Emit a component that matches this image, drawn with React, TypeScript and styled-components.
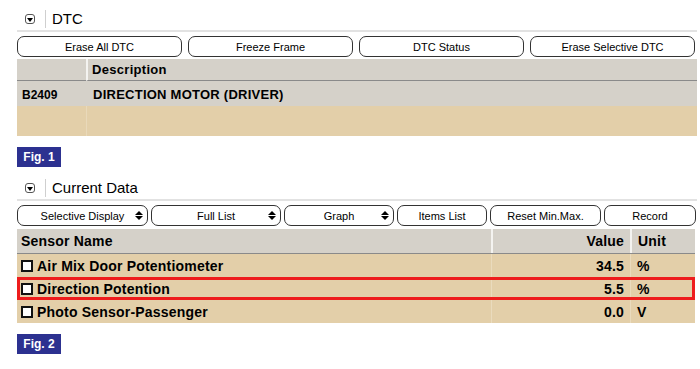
import React from "react";
import styled, { createGlobalStyle } from "styled-components";

const Global = createGlobalStyle`
  html, body { margin: 0; padding: 0; background: #fff; }
  body { font-family: "Liberation Sans", Arial, sans-serif; color: #000; }
`;

const Page = styled.div`
  width: 700px;
  height: 369px;
  padding: 0 3px 0 17px;
  box-sizing: border-box;
  overflow: hidden;
`;

const SectionHeader = styled.div<{ $top: number }>`
  display: flex;
  align-items: center;
  height: 22px;
  margin-top: ${(p) => p.$top}px;
  padding-left: 8px;
  border-bottom: 2px solid #e2e2e2;
`;

const ToggleIcon = styled.span`
  width: 10px;
  height: 10px;
  border: 1px solid #555;
  border-radius: 3px;
  box-sizing: border-box;
  display: flex;
  align-items: center;
  justify-content: center;
  &::after {
    content: "";
    border-left: 3px solid transparent;
    border-right: 3px solid transparent;
    border-top: 4px solid #000;
    margin-top: 1px;
  }
`;

const HeaderSep = styled.span`
  width: 1px;
  height: 18px;
  background: #cfcfcf;
  margin: 0 6px 0 10px;
`;

const HeaderTitle = styled.span`
  font-size: 15px;
  line-height: 18px;
`;

const ButtonRow = styled.div<{ $cols: string; $gap: number }>`
  display: grid;
  grid-template-columns: ${(p) => p.$cols};
  column-gap: ${(p) => p.$gap}px;
  margin-top: 4px;
  height: 21px;
`;

const Btn = styled.div`
  border: 1px solid #333;
  border-radius: 7px;
  background: #fff;
  font-size: 11px;
  display: flex;
  align-items: center;
  justify-content: center;
  position: relative;
  box-sizing: border-box;
  height: 21px;
`;

const SelArrow = styled.span`
  position: absolute;
  right: 4px;
  top: 5px;
  display: flex;
  flex-direction: column;
  gap: 1px;
  &::before, &::after {
    content: "";
    border-left: 4px solid transparent;
    border-right: 4px solid transparent;
  }
  &::before { border-bottom: 4px solid #000; }
  &::after { border-top: 4px solid #000; }
`;

const DtcTable = styled.div`
  margin-top: 2px;
  display: grid;
  grid-template-columns: 69px 1fr;
`;

const GrayCell = styled.div<{ $h: number; $divider?: boolean; $line?: boolean }>`
  background: #d5d1c9;
  height: ${(p) => p.$h}px;
  display: flex;
  align-items: center;
  font-weight: bold;
  font-size: 13px;
  box-sizing: border-box;
  border-left: ${(p) => (p.$divider ? "2px solid #f4f3f0" : "none")};
  border-bottom: ${(p) => (p.$line ? "1px solid #8a8a8a" : "none")};
  padding-left: ${(p) => (p.$divider ? "4px" : "5px")};
  padding-top: ${(p) => (p.$line ? "0" : "2px")};
`;

const CodeText = styled.span`
  font-size: 12px;
`;

const DescText = styled.span`
  font-size: 13px;
  letter-spacing: 0.25px;
  padding-left: 2px;
`;

const HeadText = styled.span`
  font-size: 13px;
  letter-spacing: 0.3px;
`;

const TanCell = styled.div<{ $divider?: boolean }>`
  background: #e3cfa9;
  height: 30px;
  border-left: ${(p) => (p.$divider ? "1px solid #e9d9ba" : "none")};
`;

const FigBadge = styled.div<{ $top: number }>`
  display: inline-flex;
  align-items: center;
  justify-content: center;
  margin-top: ${(p) => p.$top}px;
  width: 44px;
  height: 20px;
  background: #2c3190;
  color: #fff;
  font-weight: bold;
  font-size: 12px;
`;

const DataTable = styled.div`
  margin-top: 3px;
  width: 678px;
`;

const DataRow = styled.div<{ $head?: boolean; $hl?: boolean }>`
  display: grid;
  grid-template-columns: 474px 139px 1fr;
  height: ${(p) => (p.$head ? 25 : 23)}px;
  background: ${(p) => (p.$head ? "#d5d1c9" : "#e3cfa9")};
  border-bottom: ${(p) => (p.$head ? "1px solid #8a8a8a" : "none")};
  font-weight: bold;
  letter-spacing: 0.2px;
  box-sizing: border-box;
  outline: ${(p) => (p.$hl ? "3px solid #ee1c1c" : "none")};
  outline-offset: -3px;
`;

const DCell = styled.div<{ $align?: string; $divider?: boolean; $head?: boolean }>`
  display: flex;
  align-items: center;
  justify-content: ${(p) => p.$align || "flex-start"};
  box-sizing: border-box;
  border-left: ${(p) =>
    p.$divider ? (p.$head ? "2px solid #f4f3f0" : "1px solid #eadbbd") : "none"};
  padding: ${(p) => (p.$align === "flex-end" ? "0 6px 0 0" : "0 0 0 4px")};
  font-size: 14px;
`;

const UnitCell = styled(DCell)`
  padding-left: 6px;
`;

const Check = styled.span`
  width: 12px;
  height: 12px;
  border: 2px solid #111;
  background: #fff;
  box-sizing: border-box;
  margin-right: 4px;
`;

const dtcButtons = ["Erase All DTC", "Freeze Frame", "DTC Status", "Erase Selective DTC"];
const dataButtons: { label: string; sel?: boolean }[] = [
  { label: "Selective Display", sel: true },
  { label: "Full List", sel: true },
  { label: "Graph", sel: true },
  { label: "Items List" },
  { label: "Reset Min.Max." },
  { label: "Record" },
];

const rows = [
  { name: "Air Mix Door Potentiometer", value: "34.5", unit: "%" },
  { name: "Direction Potention", value: "5.5", unit: "%", hl: true },
  { name: "Photo Sensor-Passenger", value: "0.0", unit: "V" },
];

export default function App() {
  return (
    <Page>
      <Global />
      <SectionHeader $top={8}>
        <ToggleIcon />
        <HeaderSep />
        <HeaderTitle>DTC</HeaderTitle>
      </SectionHeader>
      <ButtonRow $cols="165px 165px 165px 165px" $gap={6}>
        {dtcButtons.map((b) => (
          <Btn key={b}>{b}</Btn>
        ))}
      </ButtonRow>
      <DtcTable>
        <GrayCell $h={22} $line />
        <GrayCell $h={22} $divider $line>
          <HeadText>Description</HeadText>
        </GrayCell>
        <GrayCell $h={25}>
          <CodeText>B2409</CodeText>
        </GrayCell>
        <GrayCell $h={25}>
          <DescText>DIRECTION MOTOR (DRIVER)</DescText>
        </GrayCell>
        <TanCell />
        <TanCell $divider />
      </DtcTable>
      <FigBadge $top={11}>Fig. 1</FigBadge>
      <SectionHeader $top={10}>
        <ToggleIcon />
        <HeaderSep />
        <HeaderTitle>Current Data</HeaderTitle>
      </SectionHeader>
      <ButtonRow $cols="131px 130px 110px 90px 111px 92px" $gap={3}>
        {dataButtons.map((b) => (
          <Btn key={b.label}>
            {b.label}
            {b.sel && <SelArrow />}
          </Btn>
        ))}
      </ButtonRow>
      <DataTable>
        <DataRow $head>
          <DCell $head>Sensor Name</DCell>
          <DCell $head $divider $align="flex-end">Value</DCell>
          <UnitCell $head $divider>Unit</UnitCell>
        </DataRow>
        {rows.map((r) => (
          <DataRow key={r.name} $hl={r.hl}>
            <DCell>
              <Check />
              {r.name}
            </DCell>
            <DCell $divider $align="flex-end">{r.value}</DCell>
            <UnitCell $divider>{r.unit}</UnitCell>
          </DataRow>
        ))}
      </DataTable>
      <FigBadge $top={11}>Fig. 2</FigBadge>
    </Page>
  );
}
